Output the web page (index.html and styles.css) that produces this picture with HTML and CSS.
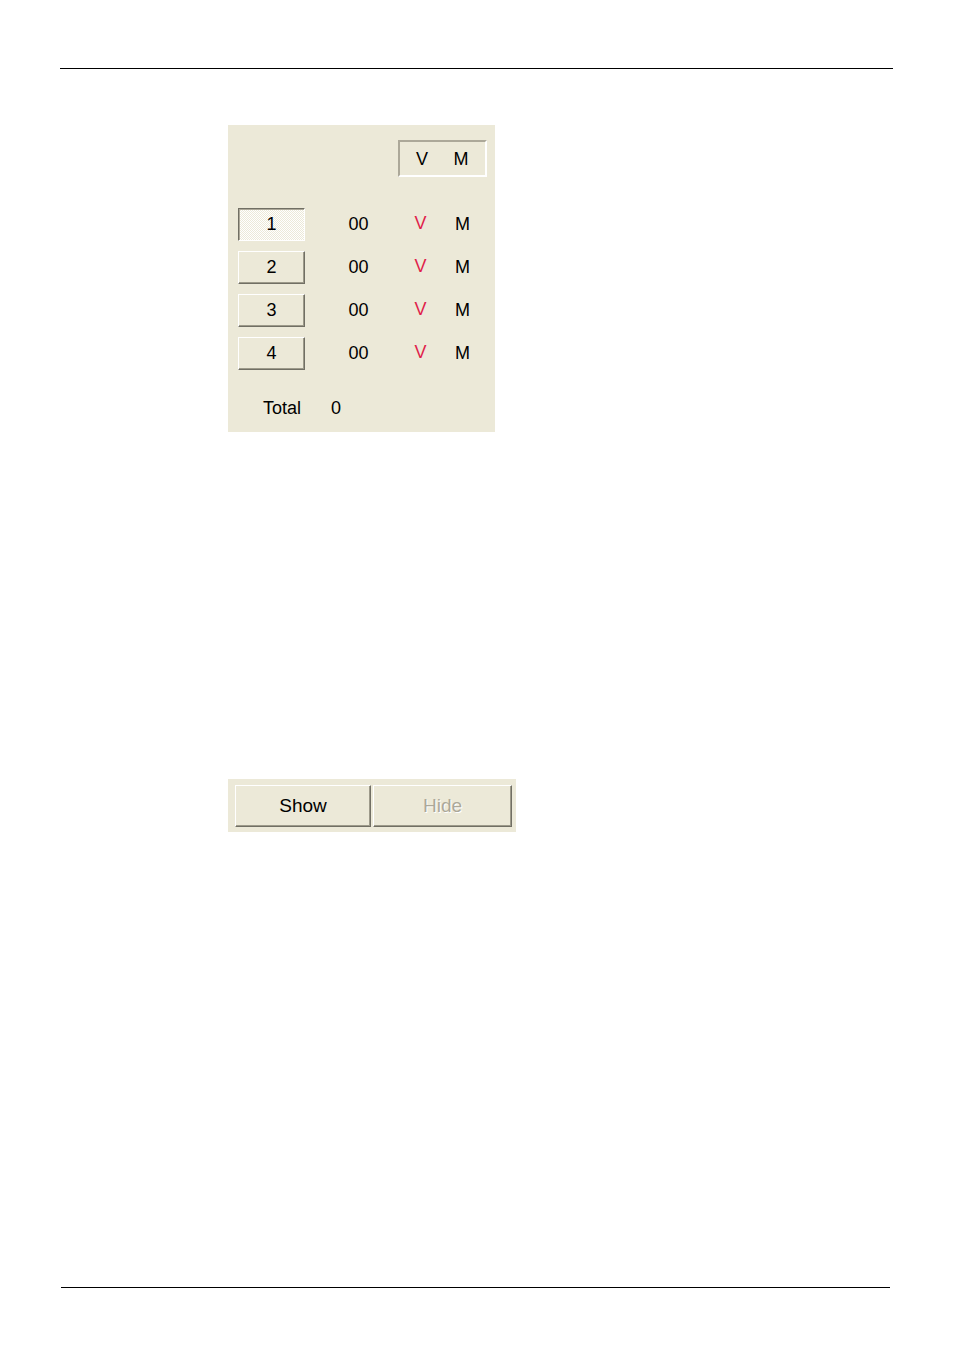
FILE: index.html
```html
<!DOCTYPE html>
<html>
<head>
<meta charset="utf-8">
<link rel="stylesheet" href="styles.css">
</head>
<body>
<div class="rule rule-top"></div>

<div class="panel panel-main">
  <div class="head">
    <div class="sunken">
      <span class="hcell">V</span>
      <span class="hcell">M</span>
    </div>
  </div>
  <div class="rows">
    <div class="row">
      <div class="btn num pressed">1</div>
      <span class="val">00</span>
      <span class="vcell">V</span>
      <span class="mcell">M</span>
    </div>
    <div class="row">
      <div class="btn num">2</div>
      <span class="val">00</span>
      <span class="vcell">V</span>
      <span class="mcell">M</span>
    </div>
    <div class="row">
      <div class="btn num">3</div>
      <span class="val">00</span>
      <span class="vcell">V</span>
      <span class="mcell">M</span>
    </div>
    <div class="row">
      <div class="btn num">4</div>
      <span class="val">00</span>
      <span class="vcell">V</span>
      <span class="mcell">M</span>
    </div>
  </div>
  <div class="total">
    <span class="total-label">Total</span>
    <span class="total-val">0</span>
  </div>
</div>

<div class="panel panel-buttons">
  <div class="btn wide show">Show</div>
  <div class="btn wide hide">Hide</div>
</div>

<div class="rule rule-bottom"></div>
</body>
</html>
```

FILE: styles.css
```css
html, body {
  margin: 0;
  padding: 0;
  background: #ffffff;
}

body {
  font-family: "Liberation Sans", Arial, sans-serif;
  font-size: 18px;
  color: #000;
}

.rule {
  height: 1px;
  background: #000;
}

.rule-top {
  margin: 68px 0 0 60px;
  width: 833px;
}

.rule-bottom {
  margin: 455px 0 0 61px;
  width: 829px;
}

.panel {
  background: #ECE9D8;
  margin-left: 228px;
  box-sizing: border-box;
}

.panel-main {
  margin-top: 56px;
  width: 267px;
  height: 307px;
  padding-top: 15px;
}

.head {
  display: flex;
  padding-left: 170px;
}

.sunken {
  box-sizing: border-box;
  width: 89px;
  height: 37px;
  border-top: 2px solid #ACA899;
  border-left: 2px solid #ACA899;
  border-right: 2px solid #FFFFFF;
  border-bottom: 2px solid #FFFFFF;
  display: flex;
  align-items: center;
  padding-left: 7px;
  gap: 9px;
}

.hcell {
  width: 30px;
  text-align: center;
  line-height: 20px;
}

.rows {
  margin-top: 31px;
  display: flex;
  flex-direction: column;
  gap: 10px;
}

.row {
  display: flex;
  align-items: center;
  height: 33px;
  padding-left: 10px;
}

.btn {
  box-sizing: border-box;
  display: flex;
  align-items: center;
  justify-content: center;
  background: #ECE9D8;
  border-top: 1px solid #FFFFFF;
  border-left: 1px solid #FFFFFF;
  border-right: 1px solid #716F64;
  border-bottom: 1px solid #716F64;
  box-shadow: inset -1px -1px 0 #9D9A8A;
}

.num {
  width: 67px;
  height: 33px;
}

.pressed {
  border-top: 1px solid #716F64;
  border-left: 1px solid #716F64;
  border-right: 1px solid #FFFFFF;
  border-bottom: 1px solid #FFFFFF;
  box-shadow: inset 1px 1px 0 #ACA899;
  background-color: #F4F3EC;
  background-image: repeating-conic-gradient(#FFFFFF 0 25%, #ECE9D8 0 50%);
  background-size: 2px 2px;
}

.val {
  width: 41px;
  margin-left: 33px;
  text-align: center;
}

.vcell {
  width: 31px;
  margin-left: 26px;
  text-align: center;
  color: #E01E4B;
  position: relative;
  top: -1px;
}

.mcell {
  width: 31px;
  margin-left: 11px;
  text-align: center;
}

.total {
  margin-top: 27px;
  display: flex;
  line-height: 22px;
  padding-left: 35px;
}

.total-val {
  margin-left: 30px;
}

.panel-buttons {
  margin-top: 347px;
  width: 288px;
  height: 53px;
  display: flex;
  gap: 2px;
  padding: 6px 0 0 7px;
}

.wide {
  height: 42px;
}

.show {
  width: 136px;
  font-size: 19px;
}

.hide {
  width: 139px;
  font-size: 19px;
  color: #ACA899;
  text-shadow: 1px 1px 0 #FFFFFF;
}
```
